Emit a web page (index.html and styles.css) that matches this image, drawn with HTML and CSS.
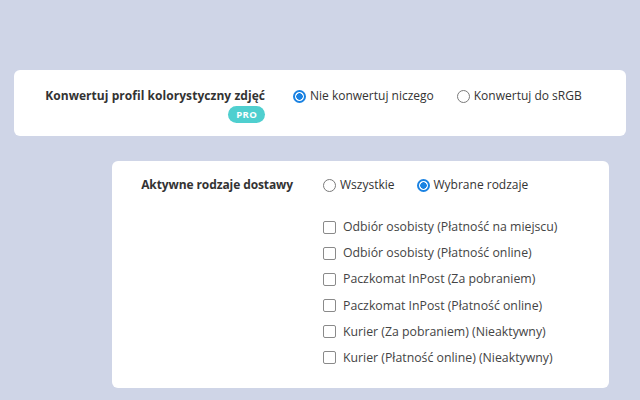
FILE: index.html
```html
<!DOCTYPE html>
<html lang="pl">
<head>
<meta charset="utf-8">
<link rel="stylesheet" href="styles.css">
</head>
<body>
<div class="page">
  <section class="card card-profile">
    <div class="label-col">
      <div class="label">Konwertuj profil kolorystyczny zdjęć</div>
      <span class="badge">PRO</span>
    </div>
    <div class="options">
      <label class="radio"><span class="dot checked"></span>Nie konwertuj niczego</label>
      <label class="radio"><span class="dot"></span>Konwertuj do sRGB</label>
    </div>
  </section>

  <section class="card card-delivery">
    <div class="label-col">
      <div class="label label-narrow">Aktywne rodzaje dostawy</div>
    </div>
    <div class="field">
      <div class="options">
        <label class="radio"><span class="dot"></span>Wszystkie</label>
        <label class="radio"><span class="dot checked"></span>Wybrane rodzaje</label>
      </div>
      <ul class="checks">
        <li class="check"><span class="box"></span>Odbiór osobisty (Płatność na miejscu)</li>
        <li class="check"><span class="box"></span>Odbiór osobisty (Płatność online)</li>
        <li class="check"><span class="box"></span>Paczkomat InPost (Za pobraniem)</li>
        <li class="check"><span class="box"></span>Paczkomat InPost (Płatność online)</li>
        <li class="check"><span class="box"></span>Kurier (Za pobraniem) (Nieaktywny)</li>
        <li class="check"><span class="box"></span>Kurier (Płatność online) (Nieaktywny)</li>
      </ul>
    </div>
  </section>
</div>
</body>
</html>
```
FILE: styles.css
```css
* { box-sizing: border-box; }
html, body { margin: 0; padding: 0; }
body {
  background: #cfd5e7;
  font-family: "Open Sans", "Noto Sans", sans-serif;
  color: #333;
  width: 640px;
  height: 400px;
  overflow: hidden;
}
.page {
  padding-top: 70px;
  display: flex;
  flex-direction: column;
  gap: 25px;
}
.card {
  background: #fff;
  border-radius: 6px;
  display: flex;
}
.card-profile {
  margin-left: 14px;
  width: 612px;
  height: 66px;
  padding-top: 17px;
}
.card-delivery {
  margin-left: 112px;
  width: 497px;
  height: 227px;
  padding-top: 15px;
}
.label-col {
  display: flex;
  flex-direction: column;
  align-items: flex-end;
}
.card-profile .label-col { width: 251px; margin-right: 28px; }
.card-delivery .label-col { width: 181px; margin-right: 30px; }
.label {
  font-weight: 700;
  font-size: 12px;
  line-height: 18px;
  color: #333;
  letter-spacing: 0.05px;
}
.label-narrow { letter-spacing: -0.1px; }
.badge {
  margin-top: 1px;
  background: #4fcfcf;
  color: #fff;
  font-size: 9.5px;
  font-weight: 700;
  line-height: 17px;
  height: 17px;
  padding: 0 8px;
  border-radius: 9px;
  letter-spacing: 0.3px;
}
.options {
  display: flex;
  gap: 23px;
  height: 18px;
  align-items: center;
}
.card-delivery .options { gap: 22px; }
.radio {
  display: flex;
  align-items: center;
  font-size: 12px;
  color: #333;
  line-height: 18px;
}
.dot {
  width: 13px;
  height: 13px;
  border-radius: 50%;
  border: 1px solid #7a7a7a;
  margin-right: 4px;
  flex: none;
  background: #fff;
}
.dot.checked {
  border: 2px solid #1a82e2;
  background: radial-gradient(circle, #1a82e2 0 3px, #fff 3.5px);
}
.checks {
  list-style: none;
  margin: 24px 0 0 0;
  padding: 0;
  display: flex;
  flex-direction: column;
  gap: 8.2px;
}
.check {
  display: flex;
  align-items: center;
  font-size: 12.3px;
  color: #444;
  line-height: 18px;
}
.box {
  width: 13px;
  height: 13px;
  border: 1px solid #8a8a8a;
  border-radius: 2px;
  margin-right: 7px;
  flex: none;
}
```
